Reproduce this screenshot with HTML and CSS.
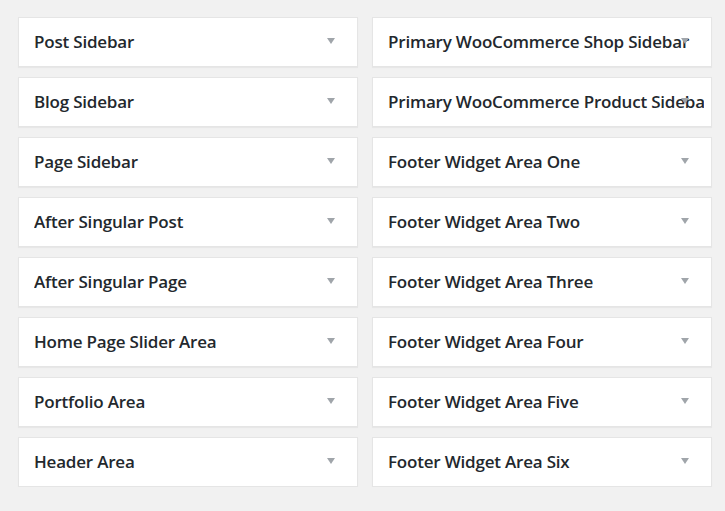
FILE: index.html
```html
<!DOCTYPE html>
<html>
<head>
<meta charset="utf-8">
<link rel="stylesheet" href="styles.css">
</head>
<body>
<div class="areas">
  <div class="col">
    <div class="widget"><span class="title">Post Sidebar</span><span class="arrow"></span></div>
    <div class="widget"><span class="title">Blog Sidebar</span><span class="arrow"></span></div>
    <div class="widget"><span class="title">Page Sidebar</span><span class="arrow"></span></div>
    <div class="widget"><span class="title">After Singular Post</span><span class="arrow"></span></div>
    <div class="widget"><span class="title">After Singular Page</span><span class="arrow"></span></div>
    <div class="widget"><span class="title">Home Page Slider Area</span><span class="arrow"></span></div>
    <div class="widget"><span class="title">Portfolio Area</span><span class="arrow"></span></div>
    <div class="widget"><span class="title">Header Area</span><span class="arrow"></span></div>
  </div>
  <div class="col">
    <div class="widget"><span class="title">Primary WooCommerce Shop Sidebar</span><span class="arrow"></span></div>
    <div class="widget"><span class="title">Primary WooCommerce Product Sidebar</span><span class="arrow"></span></div>
    <div class="widget"><span class="title">Footer Widget Area One</span><span class="arrow"></span></div>
    <div class="widget"><span class="title">Footer Widget Area Two</span><span class="arrow"></span></div>
    <div class="widget"><span class="title">Footer Widget Area Three</span><span class="arrow"></span></div>
    <div class="widget"><span class="title">Footer Widget Area Four</span><span class="arrow"></span></div>
    <div class="widget"><span class="title">Footer Widget Area Five</span><span class="arrow"></span></div>
    <div class="widget"><span class="title">Footer Widget Area Six</span><span class="arrow"></span></div>
  </div>
</div>
</body>
</html>
```
FILE: styles.css
```css
html, body {
  margin: 0;
  padding: 0;
  background: #f1f1f1;
  font-family: "Open Sans", "Liberation Sans", sans-serif;
}
.areas {
  display: flex;
  gap: 14px;
  padding: 17px 0 0 18px;
}
.col {
  display: flex;
  flex-direction: column;
  gap: 10px;
  width: 340px;
}
.widget {
  position: relative;
  box-sizing: border-box;
  height: 50px;
  background: #fff;
  border: 1px solid #e5e5e5;
  box-shadow: 0 1px 1px rgba(0,0,0,0.04);
  display: flex;
  align-items: center;
  padding-left: 15px;
}
.title {
  flex: 1;
  min-width: 0;
  margin-right: 7px;
  overflow: hidden;
  white-space: nowrap;
  font-size: 17px;
  letter-spacing: -0.2px;
  font-weight: 600;
  color: #23282d;
  line-height: 24px;
  margin-top: -1px;
}
.arrow {
  position: absolute;
  right: 22px;
  top: 20px;
  width: 0;
  height: 0;
  border-top: 6px solid #a0a5aa;
  border-left: 4px solid transparent;
  border-right: 4px solid transparent;
}
```
